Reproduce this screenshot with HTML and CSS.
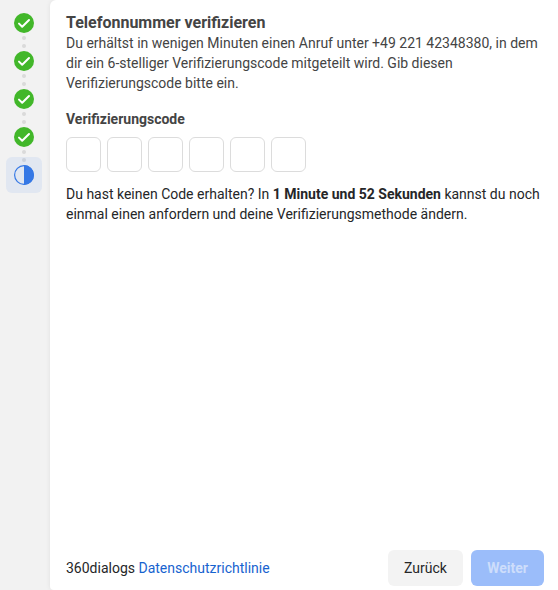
FILE: index.html
```html
<!DOCTYPE html>
<html lang="de">
<head>
<meta charset="utf-8">
<title>Telefonnummer verifizieren</title>
<link rel="stylesheet" href="styles.css">
</head>
<body>
<div class="app">
  <nav class="steps">
    <div class="step"><svg class="icon" viewBox="0 0 20 20"><circle cx="10" cy="10" r="10" fill="#42b72a"/><path d="M5 10.6 8.2 13.8 15 7" class="check"/></svg></div>
    <div class="dots"><i></i><i></i></div>
    <div class="step"><svg class="icon" viewBox="0 0 20 20"><circle cx="10" cy="10" r="10" fill="#42b72a"/><path d="M5 10.6 8.2 13.8 15 7" class="check"/></svg></div>
    <div class="dots"><i></i><i></i></div>
    <div class="step"><svg class="icon" viewBox="0 0 20 20"><circle cx="10" cy="10" r="10" fill="#42b72a"/><path d="M5 10.6 8.2 13.8 15 7" class="check"/></svg></div>
    <div class="dots"><i></i><i></i></div>
    <div class="step"><svg class="icon" viewBox="0 0 20 20"><circle cx="10" cy="10" r="10" fill="#42b72a"/><path d="M5 10.6 8.2 13.8 15 7" class="check"/></svg></div>
    <div class="dots"><i></i><i></i></div>
    <div class="step current"><svg class="icon" viewBox="0 0 20 20"><circle cx="10" cy="10" r="9.4" fill="none" stroke="#3578e5" stroke-width="1.2"/><path d="M10 0a10 10 0 0 1 0 20z" fill="#3578e5"/></svg></div>
  </nav>
  <main class="panel">
    <h1>Telefonnummer verifizieren</h1>
    <p class="intro">Du erhältst in wenigen Minuten einen Anruf unter +49 221 42348380, in dem<br>dir ein 6-stelliger Verifizierungscode mitgeteilt wird. Gib diesen<br>Verifizierungscode bitte ein.</p>
    <h2>Verifizierungscode</h2>
    <div class="code"><span></span><span></span><span></span><span></span><span></span><span></span></div>
    <p class="resend">Du hast keinen Code erhalten? In <b>1 Minute und 52 Sekunden</b> kannst du noch<br>einmal einen anfordern und deine Verifizierungsmethode ändern.</p>
    <footer>
      <div class="privacy">360dialogs <a>Datenschutzrichtlinie</a></div>
      <button class="back">Zurück</button>
      <button class="next" disabled>Weiter</button>
    </footer>
  </main>
</div>
</body>
</html>
```
FILE: styles.css
```css
* { box-sizing: border-box; margin: 0; padding: 0; }
body { background: #fff; font: 14px/20px Roboto, sans-serif; color: #252628; overflow: hidden; }
.app { display: flex; height: 590px; background: #f2f2f2; }
.steps { width: 50px; flex: none; padding: 13px 8px 0 6px; display: flex; flex-direction: column; align-items: center; }
.step { width: 36px; height: 20px; display: flex; justify-content: center; }
.icon { width: 20px; height: 20px; display: block; }
.check { fill: none; stroke: #fff; stroke-width: 2; stroke-linecap: round; stroke-linejoin: round; }
.dots { height: 18px; padding: 3px 0; display: flex; flex-direction: column; gap: 4px; }
.dots i { width: 4px; height: 4px; border-radius: 50%; background: #dadada; }
.current { height: 36px; margin-top: -8px; padding-top: 8px; border-radius: 6px; background: rgba(53, 120, 229, .09); }
.panel { flex: 1; display: flex; flex-direction: column; padding: 13px 14px 4px 16px; background: #fff; border-radius: 6px 0 0 4px; box-shadow: 0 0 5px rgba(0, 0, 0, .08); white-space: nowrap; }
h1 { font-size: 16px; line-height: 20px; font-weight: 700; color: #444; }
.intro { color: #444; }
h2 { margin-top: 16px; font-size: 14px; line-height: 20px; font-weight: 700; color: #444; }
.code { display: flex; gap: 6px; margin: 8px 0 12px; }
.code span { width: 35px; height: 35px; border: 1px solid #dcdcdc; border-radius: 6px; }
b { font-weight: 700; }
footer { margin-top: auto; display: flex; align-items: center; gap: 8px; }
.privacy { margin-right: auto; }
a { color: #1763cf; }
button { height: 36px; border: 0; border-radius: 6px; font: 14px/20px Roboto, sans-serif; }
.back { width: 75px; background: #f3f3f3; color: #252628; }
.next { width: 73px; background: #9bbdfa; color: #cdddfb; font-weight: 700; }
```
